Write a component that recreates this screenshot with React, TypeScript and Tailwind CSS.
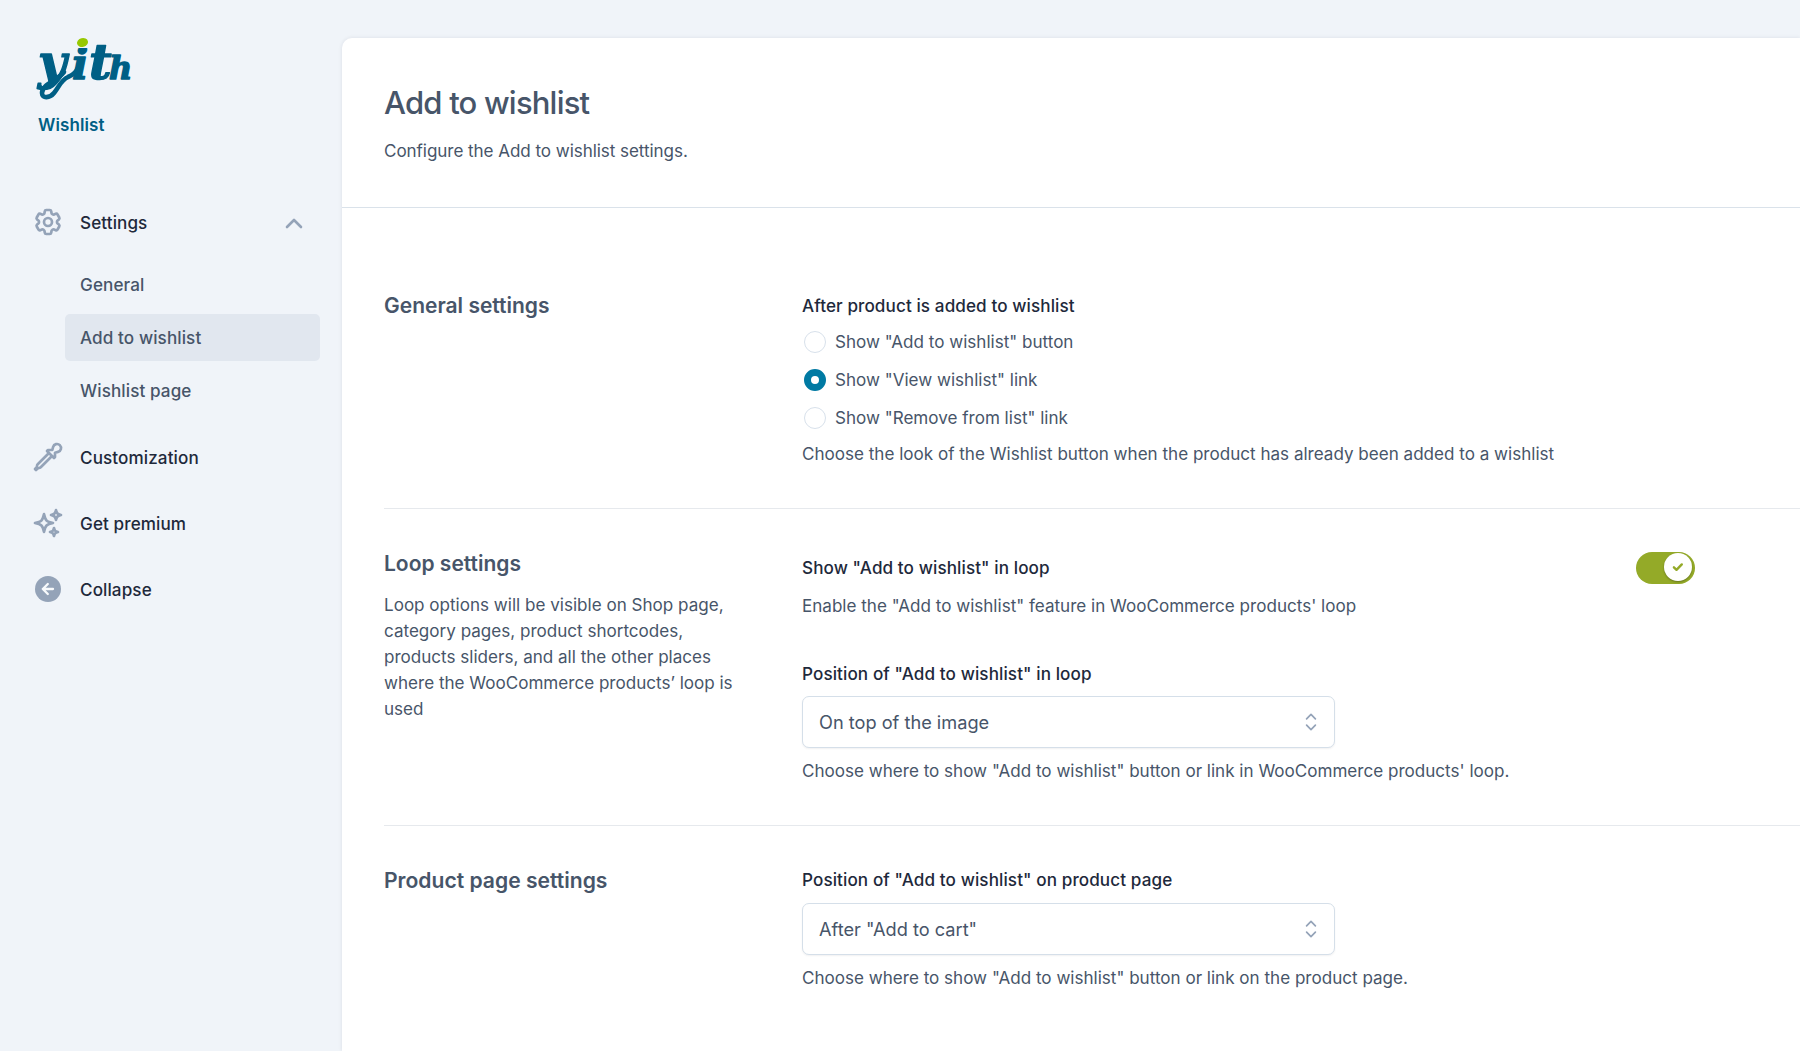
import type { ReactNode } from "react";
import { HiOutlineCog6Tooth, HiOutlineEyeDropper, HiOutlineSparkles } from "react-icons/hi2";

function Logo() {
  return (
    <svg width="94" height="64" viewBox="0 0 94 64" className="block overflow-visible" role="img" aria-label="yith">
      <defs>
        <linearGradient id="dot" gradientUnits="userSpaceOnUse" x1="0" y1="0" x2="0" y2="24">
          <stop offset="0.4" stopColor="#f0f4f9" />
          <stop offset="0.4" stopColor="#005f85" />
        </linearGradient>
      </defs>
      <g
        fill="#005f85"
        stroke="#005f85"
        strokeWidth="1.4"
        strokeLinejoin="round"
        className="font-['DejaVu_Serif',serif] font-bold italic"
      >
        <text x="0" y="40.5" fontSize="49">y</text>
        <text x="34" y="40.5" fontSize="43" fill="url(#dot)" stroke="url(#dot)">i</text>
        <text x="51" y="40.5" fontSize="49">t</text>
        <text x="71" y="40.5" fontSize="32">h</text>
      </g>
      <path
        d="M26 34C19 43 4 46 4 55c0 6 8 5 12 0 5-6 7-13 14-16 5-2 8-5 10-9"
        fill="none"
        stroke="#005f85"
        strokeWidth="4.6"
        strokeLinecap="round"
      />
      <ellipse cx="44.5" cy="4.5" rx="5.6" ry="4.4" transform="rotate(-14 44.5 4.5)" fill="#97c800" />
    </svg>
  );
}

function CollapseIcon() {
  return (
    <svg width="32" height="32" viewBox="0 0 32 32" fill="none">
      <circle cx="16" cy="16" r="13" fill="#94a3b8" />
      <path d="M21 16H10.8m5-5-5 5 5 5" stroke="#f8fafc" strokeWidth="2.3" strokeLinecap="round" strokeLinejoin="round" />
    </svg>
  );
}

function NavItem({ icon, label, children }: { icon: ReactNode; label: string; children?: ReactNode }) {
  return (
    <div className="flex h-[66px] items-center pr-[37px] pl-8 text-[#1e293b]">
      <span className="-mt-[3px] w-12 text-[#94a3b8]">{icon}</span>
      <span className="grow">{label}</span>
      {children}
    </div>
  );
}

function SubItem({ label, active }: { label: string; active?: boolean }) {
  return (
    <div
      className={`flex h-[47px] items-center rounded-[5px] pt-px pl-[15px] text-[#475569] ${active ? "bg-[#e1e7ef]" : ""}`}
    >
      {label}
    </div>
  );
}

function Radio({ label, checked }: { label: string; checked?: boolean }) {
  return (
    <div className="flex h-[38px] items-center pl-0.5">
      <span
        className={`-mt-px mr-[9px] size-[22px] rounded-full bg-white ${
          checked ? "border-[7px] border-[#007aa3]" : "border border-[#d8e1eb]"
        }`}
      />
      {label}
    </div>
  );
}

function Select({ value }: { value: string }) {
  return (
    <div className="flex h-[52px] w-[533px] items-center justify-between rounded-[7px] border border-[#d5dfe9] bg-white pr-[17px] pl-4 text-[18.2px] shadow-[0_1px_2px_rgba(15,23,42,0.06)]">
      {value}
      <svg width="12" height="18" viewBox="0 0 12 18" fill="none" stroke="#94a3b8" strokeWidth="1.7" strokeLinecap="round" strokeLinejoin="round">
        <path d="M1.6 5.8 6 1.4l4.4 4.4M1.6 12.2 6 16.6l4.4-4.4" />
      </svg>
    </div>
  );
}

function Label({ children }: { children: ReactNode }) {
  return <div className="text-[17.1px] leading-[26px] font-medium tracking-[0.1px] text-[#1e293b]">{children}</div>;
}

export default function App() {
  return (
    <div className="flex h-[1051px] w-[1800px] overflow-hidden bg-[#f0f4f9] font-['Inter',sans-serif] text-[17.07px] leading-[26px] text-[#475569]">
      <aside className="w-[342px] shrink-0 text-[17.1px] font-medium tracking-[0.1px]">
        <div className="pt-[38px] pl-[38px]">
          <Logo />
          <div className="mt-[10px] text-[17px] font-semibold text-[#005f85]">Wishlist</div>
        </div>
        <nav className="mt-[52px]">
          <NavItem icon={<HiOutlineCog6Tooth size={32} strokeWidth={2} />} label="Settings">
            <svg width="18" height="11" viewBox="0 0 18 11" fill="none" stroke="#94a3b8" strokeWidth="2.6" strokeLinecap="round" strokeLinejoin="round" className="mr-[2px]">
              <path d="M2 9 9 2l7 7" />
            </svg>
          </NavItem>
          <div className="mt-[5px] mb-[11px] ml-[65px] flex w-[255px] flex-col gap-1.5">
            <SubItem label="General" />
            <SubItem label="Add to wishlist" active />
            <SubItem label="Wishlist page" />
          </div>
          <NavItem icon={<HiOutlineEyeDropper size={32} strokeWidth={2} />} label="Customization" />
          <NavItem icon={<HiOutlineSparkles size={32} strokeWidth={2} />} label="Get premium" />
          <NavItem icon={<CollapseIcon />} label="Collapse" />
        </nav>
      </aside>

      <main className="mt-[38px] grow rounded-tl-[10px] bg-white shadow-[0_0_4px_rgba(15,23,42,0.09)]">
        <header className="h-[170px] border-b border-[#dae2ea] pt-11 pl-[42px]">
          <h1 className="text-[31px] leading-[41px] font-medium tracking-[-0.8px]">Add to wishlist</h1>
          <p className="mt-[15px] tracking-[-0.06px]">Configure the Add to wishlist settings.</p>
        </header>

        <div className="pl-[42px]">
          <section className="flex border-b border-[#e6e9ed] pt-[85px] pb-[41px]">
            <h2 className="w-[418px] text-[21px] leading-[26px] font-semibold">General settings</h2>
            <div>
              <Label>After product is added to wishlist</Label>
              <div className="my-1">
                <Radio label={'Show "Add to wishlist" button'} />
                <Radio label={'Show "View wishlist" link'} checked />
                <Radio label={'Show "Remove from list" link'} />
              </div>
              <p>Choose the look of the Wishlist button when the product has already been added to a wishlist</p>
            </div>
          </section>

          <section className="flex border-b border-[#e6e9ed] pt-10 pb-[41px]">
            <div className="w-[418px] pr-[62px]">
              <h2 className="text-[21px] leading-[29px] font-semibold">Loop settings</h2>
              <p className="mt-[14px]">
                Loop options will be visible on Shop page, category pages, product shortcodes, products sliders, and
                all the other places where the WooCommerce products’ loop is used
              </p>
            </div>
            <div className="w-[893px] pt-0.5">
              <div className="flex h-[33px] items-center justify-between">
                <Label>Show "Add to wishlist" in loop</Label>
                <span className="flex h-8 w-[59px] items-center justify-end rounded-full bg-[#94aa28] pr-[3px]">
                  <span className="mb-[1px] flex size-7 items-center justify-center rounded-full bg-white shadow-[0_1px_2px_rgba(0,0,0,0.3)]">
                    <svg width="12" height="10" viewBox="0 0 12 10" fill="none" stroke="#94aa28" strokeWidth="2.4" strokeLinecap="round" strokeLinejoin="round">
                      <path d="m1.9 5.3 2.6 2.5 5.3-5.4" />
                    </svg>
                  </span>
                </span>
              </div>
              <p className="mt-[9px] mb-[42px]">Enable the "Add to wishlist" feature in WooCommerce products' loop</p>
              <Label>Position of "Add to wishlist" in loop</Label>
              <div className="mt-[9px] mb-[10px]">
                <Select value="On top of the image" />
              </div>
              <p>Choose where to show "Add to wishlist" button or link in WooCommerce products' loop.</p>
            </div>
          </section>

          <section className="flex pt-[41px]">
            <h2 className="w-[418px] pt-px text-[21.1px] leading-[26px] font-semibold">Product page settings</h2>
            <div>
              <Label>Position of "Add to wishlist" on product page</Label>
              <div className="my-[10px]">
                <Select value={'After "Add to cart"'} />
              </div>
              <p>Choose where to show "Add to wishlist" button or link on the product page.</p>
            </div>
          </section>
        </div>
      </main>
    </div>
  );
}
